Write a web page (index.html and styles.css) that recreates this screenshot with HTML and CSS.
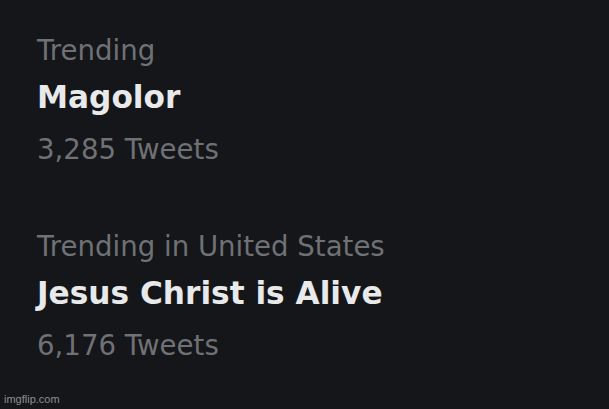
FILE: index.html
```html
<!DOCTYPE html>
<html>
<head>
<meta charset="utf-8">
<link rel="stylesheet" href="styles.css">
</head>
<body>
<div class="page">
  <div class="trends">
    <div class="trend">
      <div class="label">Trending</div>
      <div class="title">Magolor</div>
      <div class="count">3,285 Tweets</div>
    </div>
    <div class="trend">
      <div class="label">Trending in United States</div>
      <div class="title">Jesus Christ is Alive</div>
      <div class="count">6,176 Tweets</div>
    </div>
  </div>
  <div class="watermark">imgflip.com</div>
</div>
</body>
</html>
```
FILE: styles.css
```css
html, body {
  margin: 0;
  padding: 0;
  background: #151619;
}
.page {
  width: 609px;
  height: 409px;
  display: flex;
  flex-direction: column;
  justify-content: space-between;
  box-sizing: border-box;
  font-family: "DejaVu Sans", sans-serif;
}
.trends {
  display: flex;
  flex-direction: column;
  gap: 51px;
  padding: 28px 0 0 37px;
}
.trend {
  display: flex;
  flex-direction: column;
}
.label, .count {
  color: #6f7175;
  font-size: 27.6px;
  line-height: 46px;
  height: 46px;
  white-space: nowrap;
}
.title {
  color: #e8e9ea;
  font-size: 31.2px;
  font-weight: 700;
  line-height: 46px;
  height: 46px;
  margin-bottom: 7px;
  white-space: nowrap;
}
.watermark {
  font-family: "Liberation Sans", Arial, sans-serif;
  font-size: 11px;
  line-height: 13px;
  color: #8d8e91;
  padding: 0 0 3px 4px;
}
```
